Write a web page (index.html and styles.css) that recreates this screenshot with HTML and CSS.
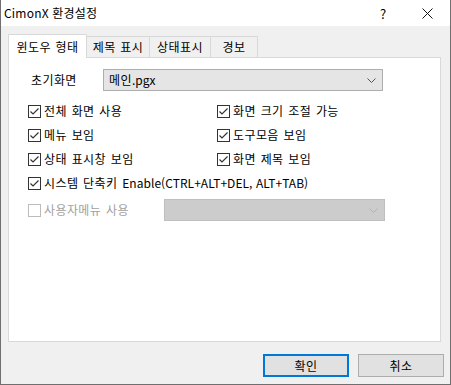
FILE: index.html
```html
<!DOCTYPE html>
<html lang="ko">
<head>
  <meta charset="UTF-8">
  <title>CimonX 환경설정</title>
  <link rel="stylesheet" href="styles.css">
</head>
<body>
  <div class="window">
    <!-- 제목 표시줄 -->
    <div class="titlebar">
      <span class="title">CimonX 환경설정</span>
      <span class="help">?</span>
      <span class="close">
        <svg width="11" height="11" viewBox="0 0 11 11"><path d="M0.5 0.5 L10.5 10.5 M10.5 0.5 L0.5 10.5" stroke="#111" stroke-width="1" fill="none"/></svg>
      </span>
    </div>

    <!-- 탭 -->
    <div class="tabs">
      <div class="tab active" style="width:79px">윈도우 형태</div>
      <div class="tab" style="width:63px">제목 표시</div>
      <div class="tab" style="width:61px">상태표시</div>
      <div class="tab" style="width:47px">경보</div>
    </div>

    <div class="panel">
      <div class="start-row">
        <span class="start-label">초기화면</span>
        <div class="combo">
          <span>메인<span class="latin">.pgx</span></span>
          <svg width="9" height="5" viewBox="0 0 9 5"><path d="M0.5 0.5 L4.5 4.5 L8.5 0.5" stroke="#555" fill="none"/></svg>
        </div>
      </div>

      <div class="options">
        <label class="check"><span class="box on"></span>전체 화면 사용</label>
        <label class="check"><span class="box on"></span>화면 크기 조절 가능</label>
        <label class="check"><span class="box on"></span>메뉴 보임</label>
        <label class="check"><span class="box on"></span>도구모음 보임</label>
        <label class="check"><span class="box on"></span>상태 표시창 보임</label>
        <label class="check"><span class="box on"></span>화면 제목 보임</label>
        <label class="check wide"><span class="box on"></span>시스템 단축키 <span class="latin">Enable(CTRL+ALT+DEL, ALT+TAB)</span></label>
      </div>

      <div class="user-row">
        <label class="check disabled"><span class="box"></span>사용자메뉴 사용</label>
        <div class="combo off">
          <span></span>
          <svg width="9" height="5" viewBox="0 0 9 5"><path d="M0.5 0.5 L4.5 4.5 L8.5 0.5" stroke="#b0b0b0" fill="none"/></svg>
        </div>
      </div>
    </div>

    <!-- 하단 버튼 -->
    <div class="buttons">
      <button class="btn default">확인</button>
      <button class="btn">취소</button>
    </div>
  </div>
</body>
</html>
```

FILE: styles.css
```css
body {
  margin: 0;
  font-family: "Segoe UI", "Noto Sans CJK KR", sans-serif;
  font-size: 12px;
  color: #000;
  background: #fff;
}
.window {
  box-sizing: border-box;
  width: 451px;
  height: 385px;
  border: 1px solid #6f6f6f;
  border-top: none;
  background-color: #f0f0f0;
  display: flex;
  flex-direction: column;
}
.titlebar {
  height: 26px;
  background: #fff;
  display: flex;
  align-items: center;
  padding-left: 3px;
}
.title {
  flex: 1;
  line-height: 16px;
  font-size: 12px;
  letter-spacing: 0.2px;
}
.help {
  width: 12px;
  text-align: center;
  margin-right: 33px;
  font-size: 13px;
}
.close {
  display: flex;
  margin-right: 17px;
}

/* 탭 */
.tabs {
  display: flex;
  align-items: flex-end;
  height: 23px;
  margin-top: 8px;
  padding-left: 7px;
}
.tab {
  box-sizing: border-box;
  height: 21px;
  border: 1px solid #d9d9d9;
  border-bottom: none;
  border-left: none;
  background: #f0f0f0;
  text-align: center;
  line-height: 20px;
  letter-spacing: 0.4px;
  word-spacing: 1px;
}
.tab.active {
  height: 24px;
  border-left: 1px solid #d9d9d9;
  background: #fff;
  margin-bottom: -1px;
  line-height: 24px;
  position: relative;
  z-index: 1;
}

.panel {
  box-sizing: border-box;
  width: 433px;
  height: 285px;
  margin-left: 7px;
  background: #fff;
  border: 1px solid #d9d9d9;
  padding: 11px 0 0 19px;
  letter-spacing: 0.4px;
  word-spacing: 1px;
}
.latin {
  letter-spacing: 0.05px;
  word-spacing: 0;
}
.start-row {
  display: flex;
  align-items: center;
  height: 22px;
}
.start-label {
  width: 72px;
  padding-left: 3px;
  line-height: 16px;
}
.combo {
  box-sizing: border-box;
  width: 280px;
  height: 22px;
  border: 1px solid #adadad;
  background: #e5e5e5;
  display: flex;
  align-items: center;
  justify-content: space-between;
  padding: 0 6px 0 5px;
  line-height: 16px;
}
.combo.off {
  width: 221px;
  background: #cccccc;
  border-color: #bfbfbf;
}

.options {
  display: grid;
  grid-template-columns: 189px auto;
  grid-auto-rows: 24px;
  margin-top: 8px;
}
.check {
  display: flex;
  align-items: center;
  line-height: 16px;
  white-space: pre;
}
.check.wide {
  grid-column: 1 / 3;
}
.box {
  box-sizing: border-box;
  width: 13px;
  height: 13px;
  border: 1px solid #333;
  background: #fff;
  margin-right: 3px;
  flex-shrink: 0;
}
.box.on {
  background: #fff url("data:image/svg+xml,%3Csvg xmlns='http://www.w3.org/2000/svg' width='11' height='11'%3E%3Cpath d='M1.5 5.5 L4 8 L9.5 2.5' stroke='%23333' stroke-width='1.2' fill='none'/%3E%3C/svg%3E") no-repeat center;
}
.check.disabled {
  color: #a0a0a0;
  width: 136px;
}
.check.disabled .box {
  border-color: #bcbcbc;
}
.user-row {
  display: flex;
  align-items: center;
  margin-top: 4px;
  height: 22px;
}

/* 버튼 */
.buttons {
  display: flex;
  justify-content: flex-end;
  gap: 9px;
  padding: 12px 6px 0 0;
}
.btn {
  box-sizing: border-box;
  width: 86px;
  height: 23px;
  font-family: inherit;
  font-size: 12px;
  background: #e1e1e1;
  border: 1px solid #adadad;
  padding: 0;
  line-height: 16px;
  letter-spacing: 0.4px;
}
.btn.default {
  border: 2px solid #0078d7;
}
```
